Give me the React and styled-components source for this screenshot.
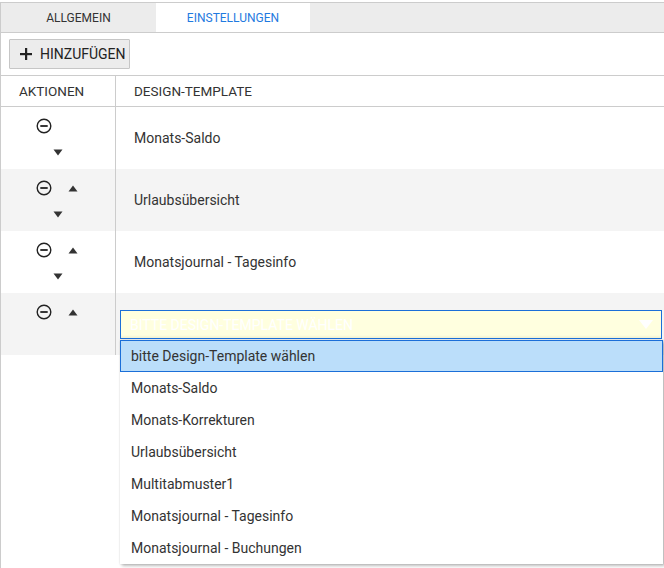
import React from "react";
import styled, { createGlobalStyle } from "styled-components";

const GlobalStyle = createGlobalStyle`
  html, body {
    margin: 0;
    padding: 0;
    background: #ffffff;
  }
  body {
    font-family: Roboto, "Liberation Sans", sans-serif;
    color: #333333;
    font-size: 14px;
  }
`;

const rows = [
  { name: "Monats-Saldo", up: false, down: true },
  { name: "Urlaubsübersicht", up: true, down: true },
  { name: "Monatsjournal - Tagesinfo", up: true, down: true },
];

const options = [
  "bitte Design-Template wählen",
  "Monats-Saldo",
  "Monats-Korrekturen",
  "Urlaubsübersicht",
  "Multitabmuster1",
  "Monatsjournal - Tagesinfo",
  "Monatsjournal - Buchungen",
];

const MinusIcon = () => (
  <svg width="16" height="16" viewBox="0 0 16 16">
    <circle cx="8" cy="8" r="6.8" fill="none" stroke="#222" strokeWidth="1.4" />
    <rect x="4.3" y="7.1" width="7.4" height="1.8" fill="#222" />
  </svg>
);

const Arrow = ({ dir }) => (
  <svg width="10" height="7" viewBox="0 0 10 7">
    {dir === "up" ? (
      <polygon points="5,0.5 9.5,6.5 0.5,6.5" fill="#333" />
    ) : (
      <polygon points="0.5,0.5 9.5,0.5 5,6.5" fill="#333" />
    )}
  </svg>
);

const App = () => {
  return (
    <>
      <GlobalStyle />
      <Page>
        <Frame>
          <TabBar>
            <Tab>Allgemein</Tab>
            <Tab active>Einstellungen</Tab>
          </TabBar>
          <Toolbar>
            <AddButton>
              <PlusIcon width="12" height="12" viewBox="0 0 12 12">
                <rect x="5" y="0" width="2.2" height="12" fill="#222" />
                <rect x="0" y="5" width="12" height="2.2" fill="#222" />
              </PlusIcon>
              Hinzufügen
            </AddButton>
          </Toolbar>
          <Table>
            <HeaderRow>
              <ActionCol>
                <HeadText>Aktionen</HeadText>
              </ActionCol>
              <MainCol>
                <HeadText>Design-Template</HeadText>
              </MainCol>
            </HeaderRow>
            {rows.map((r, i) => (
              <Row key={r.name} striped={i % 2 === 1}>
                <ActionCol>
                  <Actions>
                    <IconLine>
                      <MinusIcon />
                      <Slot hidden={!r.up}>
                        <Arrow dir="up" />
                      </Slot>
                    </IconLine>
                    <Slot hidden={!r.down}>
                      <Arrow dir="down" />
                    </Slot>
                  </Actions>
                </ActionCol>
                <MainCol>
                  <CellText>{r.name}</CellText>
                </MainCol>
              </Row>
            ))}
            <Row striped>
              <ActionCol>
                <Actions>
                  <IconLine>
                    <MinusIcon />
                    <Slot>
                      <Arrow dir="up" />
                    </Slot>
                  </IconLine>
                </Actions>
              </ActionCol>
              <SelectCol>
                <SelectBox>
                  <Placeholder>bitte Design-Template wählen</Placeholder>
                  <svg width="14" height="9" viewBox="0 0 14 9">
                    <polygon points="0,0 14,0 7,9" fill="#ffffff" />
                  </svg>
                </SelectBox>
                <Dropdown>
                  {options.map((o, i) => (
                    <Option key={o} selected={i === 0}>
                      {o}
                    </Option>
                  ))}
                </Dropdown>
              </SelectCol>
            </Row>
          </Table>
        </Frame>
      </Page>
    </>
  );
};

export default App;

const Page = styled.div`
  padding-top: 2px;
  height: 566px;
  overflow: hidden;
`;

const Frame = styled.div`
  border-top: 1px solid #cccccc;
  border-left: 1px solid #cccccc;
  height: 100%;
`;

const TabBar = styled.div`
  display: flex;
  height: 29px;
  background: #ececec;
  border-bottom: 1px solid #cccccc;
`;

const Tab = styled.div`
  width: ${(p) => (p.active ? "154px" : "155px")};
  display: flex;
  align-items: center;
  justify-content: center;
  font-size: 12px;
  text-transform: uppercase;
  background: ${(p) => (p.active ? "#ffffff" : "transparent")};
  color: ${(p) => (p.active ? "#1f7ae0" : "#333333")};
`;

const Toolbar = styled.div`
  height: 43px;
  padding: 6px 8px 0;
  box-sizing: border-box;
  border-bottom: 1px solid #cccccc;
`;

const AddButton = styled.button`
  display: flex;
  align-items: center;
  gap: 8px;
  height: 30px;
  width: 121px;
  padding: 0 4px 0 10px;
  background: #ececec;
  border: 1px solid #c6c6c6;
  border-radius: 1px;
  font-family: Roboto, "Liberation Sans", sans-serif;
  font-size: 14px;
  text-transform: uppercase;
  color: #222222;
  white-space: nowrap;
`;

const PlusIcon = styled.svg`
  flex: none;
`;

const Table = styled.div`
  display: flex;
  flex-direction: column;
`;

const HeaderRow = styled.div`
  display: flex;
  height: 30px;
  border-bottom: 1px solid #cccccc;
`;

const Row = styled.div`
  display: flex;
  height: 62px;
  background: ${(p) => (p.striped ? "#f4f4f4" : "#ffffff")};
`;

const ActionCol = styled.div`
  width: 114px;
  flex: none;
  border-right: 1px solid #cccccc;
  display: flex;
  align-items: center;
`;

const MainCol = styled.div`
  flex: 1;
  display: flex;
  align-items: center;
  padding-left: 18px;
`;

const SelectCol = styled.div`
  flex: 1;
  position: relative;
  padding: 17px 2px 0 4px;
`;

const HeadText = styled.span`
  padding-left: 18px;
  font-size: 13.5px;
  text-transform: uppercase;
  color: #333333;
  ${MainCol} & {
    padding-left: 0;
  }
`;

const CellText = styled.span`
  font-size: 14px;
  color: #333333;
`;

const Actions = styled.div`
  align-self: flex-start;
  width: 100%;
  padding-top: 11px;
  display: flex;
  flex-direction: column;
  align-items: center;
  gap: 10px;
`;

const IconLine = styled.div`
  display: flex;
  align-items: center;
  gap: 16px;
  height: 16px;
  margin-left: -3px;
`;

const Slot = styled.div`
  display: flex;
  visibility: ${(p) => (p.hidden ? "hidden" : "visible")};
  height: 16px;
  align-items: center;
`;

const SelectBox = styled.div`
  height: 29px;
  box-sizing: border-box;
  border: 1px solid #1b6fd8;
  background: #ffffdf;
  display: flex;
  align-items: center;
  justify-content: space-between;
  padding: 0 8px 0 9px;
  box-shadow: inset 0 -3px 3px -2px rgba(0, 0, 0, 0.08);
`;

const Placeholder = styled.span`
  color: #ffffff;
  font-size: 14px;
  text-transform: uppercase;
`;

const Dropdown = styled.div`
  position: absolute;
  top: 47px;
  left: 4px;
  right: 1px;
  background: #ffffff;
  box-shadow: 2px 2px 3px rgba(0, 0, 0, 0.25), 0 0 2px rgba(0, 0, 0, 0.15);
  z-index: 5;
`;

const Option = styled.div`
  height: 32px;
  box-sizing: border-box;
  display: flex;
  align-items: center;
  padding-left: 10px;
  font-size: 14px;
  color: #333333;
  background: ${(p) => (p.selected ? "#bbdefa" : "#ffffff")};
  border: 1px solid ${(p) => (p.selected ? "#1b6fd8" : "transparent")};
`;
